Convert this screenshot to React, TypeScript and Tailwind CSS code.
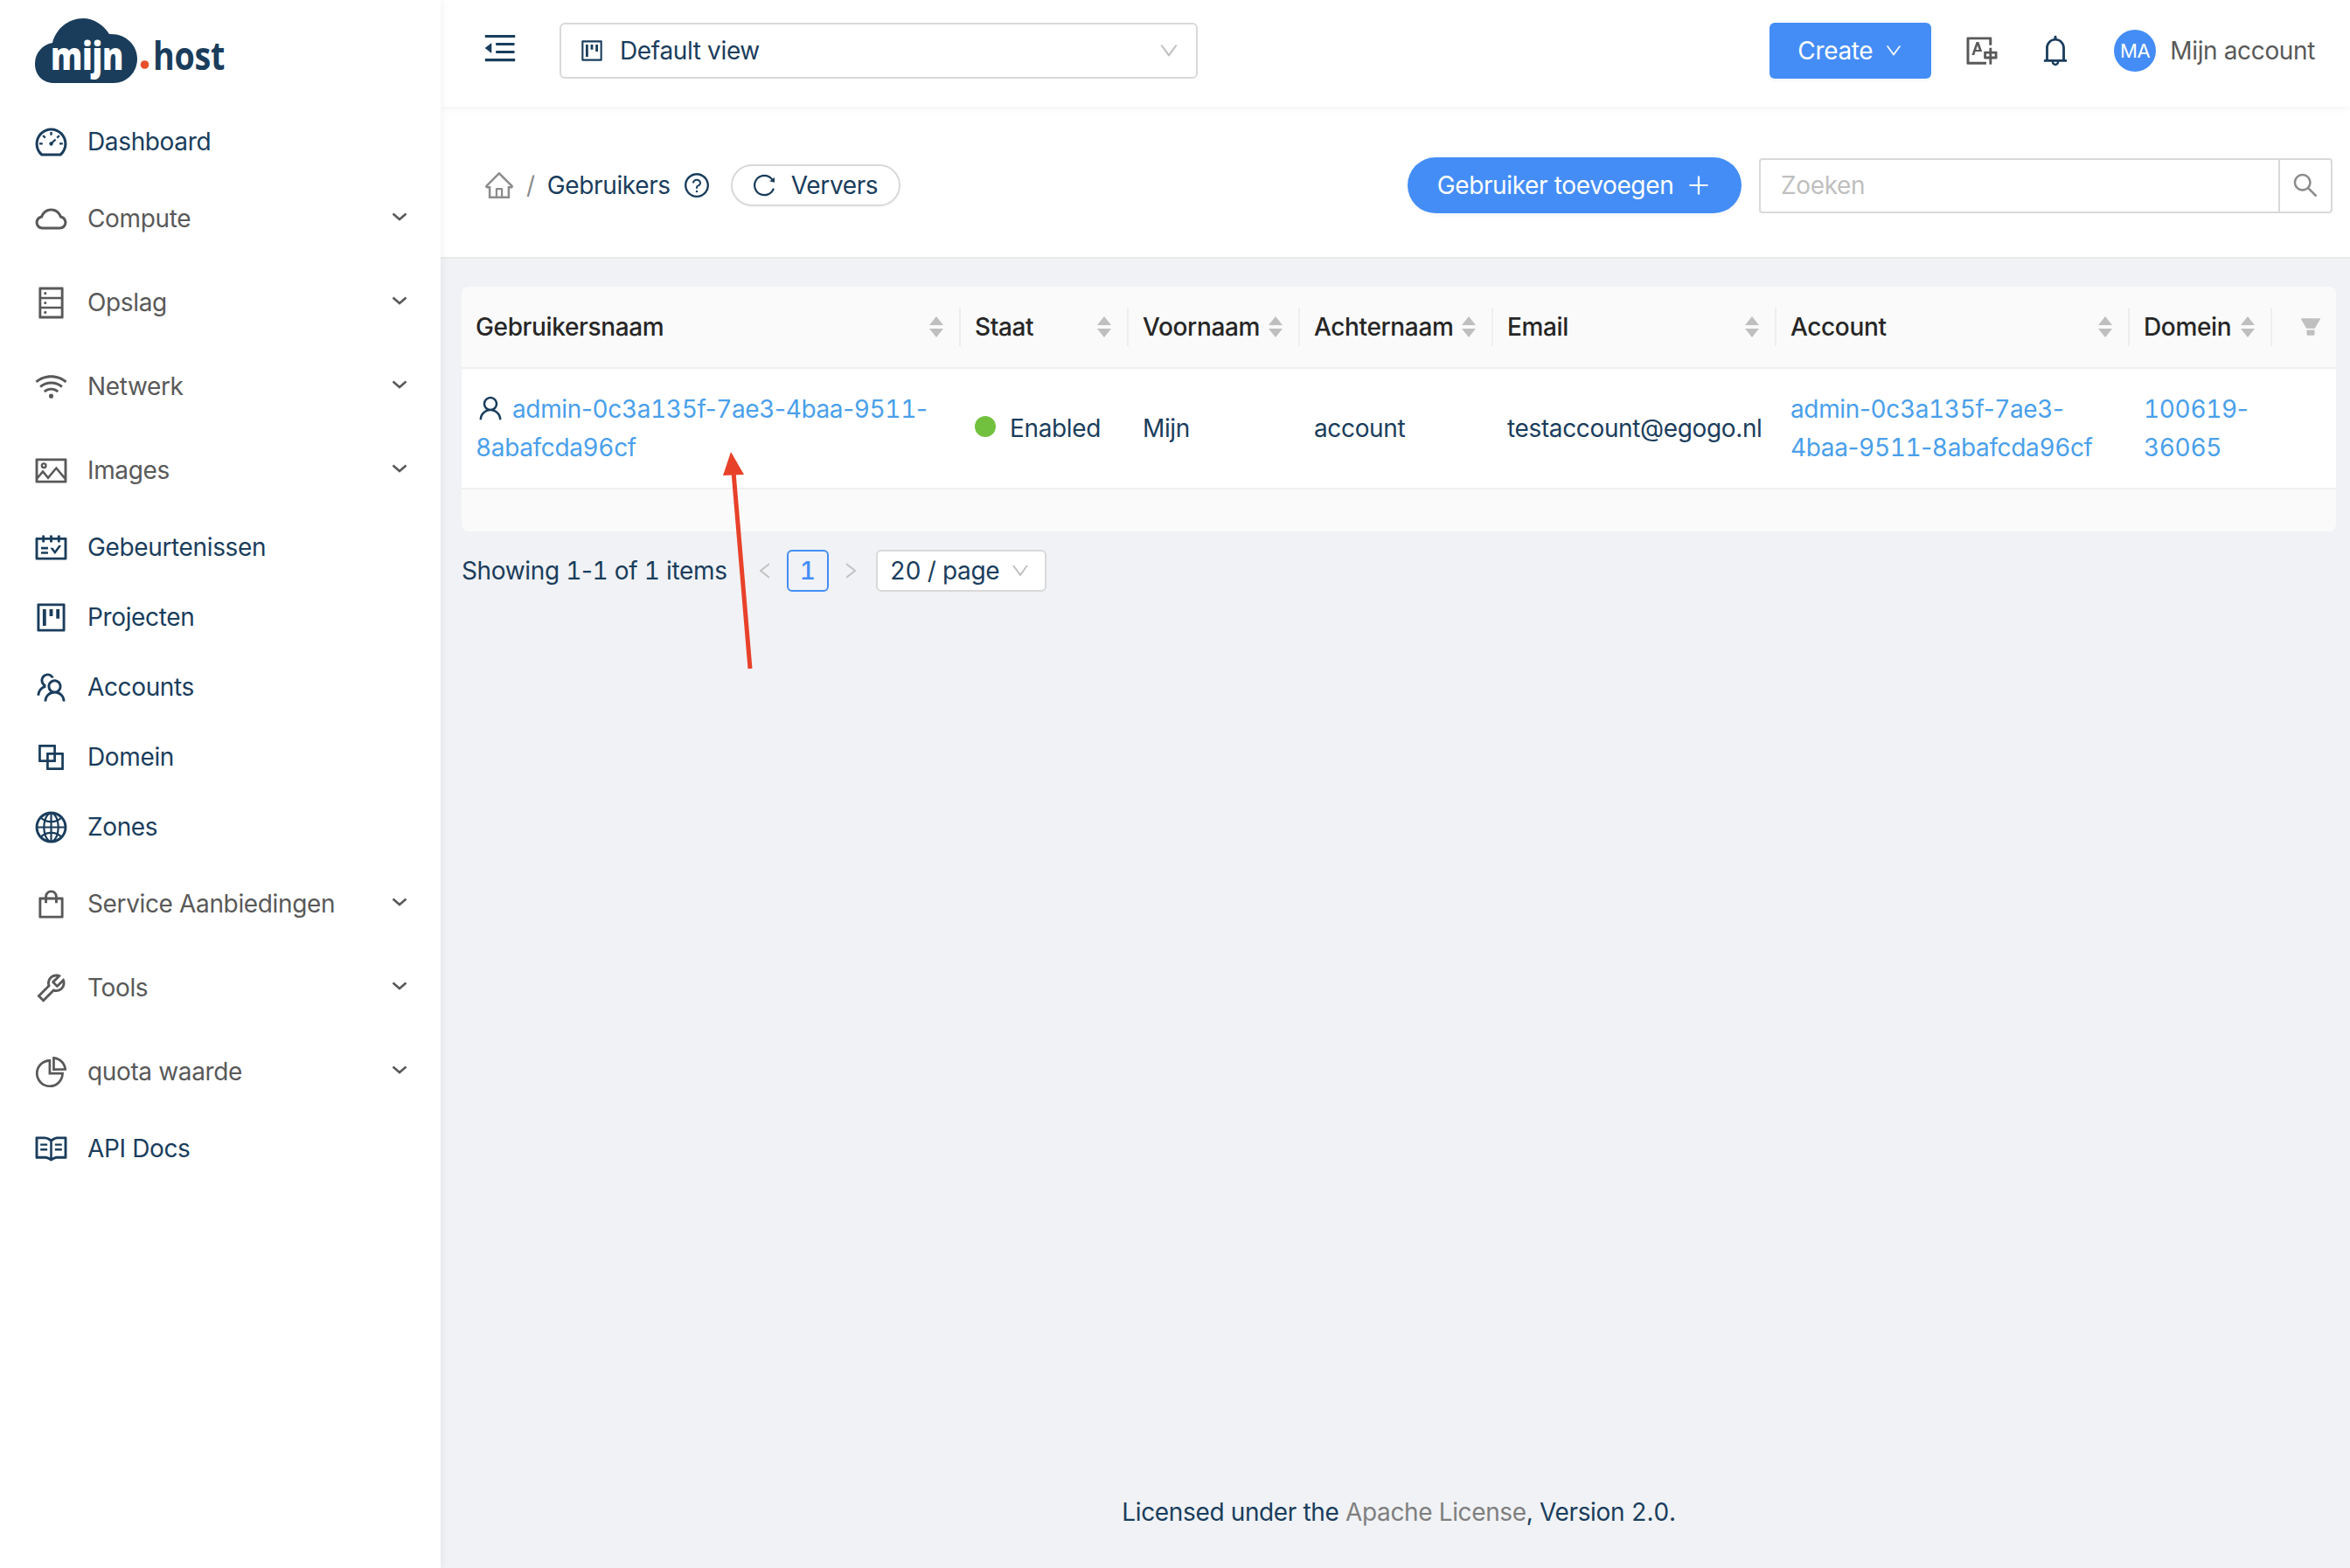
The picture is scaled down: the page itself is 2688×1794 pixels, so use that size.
import type { ReactNode } from 'react';
import {
  AiFillFilter,
  AiOutlineBell,
  AiOutlineBlock,
  AiOutlineCloud,
  AiOutlineDashboard,
  AiOutlineDatabase,
  AiOutlineDown,
  AiOutlineGlobal,
  AiOutlineHome,
  AiOutlineLeft,
  AiOutlineMenuFold,
  AiOutlinePicture,
  AiOutlinePieChart,
  AiOutlinePlus,
  AiOutlineProject,
  AiOutlineQuestionCircle,
  AiOutlineRead,
  AiOutlineReload,
  AiOutlineRight,
  AiOutlineSchedule,
  AiOutlineSearch,
  AiOutlineShopping,
  AiOutlineTeam,
  AiOutlineTool,
  AiOutlineTranslation,
  AiOutlineUser,
  AiOutlineWifi,
} from 'react-icons/ai';

const menu: { label: string; icon: ReactNode; sub?: boolean }[] = [
  { label: 'Dashboard', icon: <AiOutlineDashboard size={41} /> },
  { label: 'Compute', icon: <AiOutlineCloud size={41} />, sub: true },
  { label: 'Opslag', icon: <AiOutlineDatabase size={41} />, sub: true },
  { label: 'Netwerk', icon: <AiOutlineWifi size={41} />, sub: true },
  { label: 'Images', icon: <AiOutlinePicture size={41} />, sub: true },
  { label: 'Gebeurtenissen', icon: <AiOutlineSchedule size={41} /> },
  { label: 'Projecten', icon: <AiOutlineProject size={41} /> },
  { label: 'Accounts', icon: <AiOutlineTeam size={41} /> },
  { label: 'Domein', icon: <AiOutlineBlock size={41} /> },
  { label: 'Zones', icon: <AiOutlineGlobal size={41} /> },
  { label: 'Service Aanbiedingen', icon: <AiOutlineShopping size={41} />, sub: true },
  { label: 'Tools', icon: <AiOutlineTool size={41} />, sub: true },
  { label: 'quota waarde', icon: <AiOutlinePieChart size={41} />, sub: true },
  { label: 'API Docs', icon: <AiOutlineRead size={41} /> },
];

const columns = ['Gebruikersnaam', 'Staat', 'Voornaam', 'Achternaam', 'Email', 'Account', 'Domein'];

// digits are tabular in the original, hyphens are not
function Nums({ text }: { text: string }) {
  return (
    <>
      {text.split(/(\d+)/).map((part, i) =>
        i % 2 ? (
          <span key={i} className="tabular-nums">
            {part}
          </span>
        ) : (
          part
        ),
      )}
    </>
  );
}

function Logo() {
  return (
    <svg width="230" height="80" viewBox="40 20 230 80" className="block overflow-visible">
      <path
        d="M62 95C48 95 40 85 40 73C40 60 49 51 60 49C64 33 78 21 95 21C107 21 118 28 125 39C144 38 157 52 157 67C157 83 145 95 130 95Z"
        fill="#1a3d5c"
      />
      <text x="58" y="80" fill="#fff" fontSize="45" fontWeight="800" textLength="83" lengthAdjust="spacingAndGlyphs" fontFamily="'Open Sans', sans-serif">
        mijn
      </text>
      <circle cx="165.5" cy="74" r="4.8" fill="#e8502a" />
      <text x="175" y="80" fill="#1a3d5c" fontSize="44" fontWeight="700" textLength="82" lengthAdjust="spacingAndGlyphs" fontFamily="'Open Sans', sans-serif">
        host
      </text>
    </svg>
  );
}

function SubArrow() {
  return (
    <svg width="18" height="10" viewBox="0 0 18 10" fill="none" stroke="#595959" strokeWidth="2.6">
      <path d="M1.5 1.5L9 8L16.5 1.5" />
    </svg>
  );
}

function SideMenu() {
  return (
    <aside className="relative z-20 w-[504px] shrink-0 bg-white shadow-[2px_0_8px_rgba(29,35,41,0.05)]">
      <div className="h-[122px] pl-[40px] pt-[20px]">
        <Logo />
      </div>
      {menu.map(item => (
        <div
          key={item.label}
          className={`flex items-center pl-[40px] pr-[38px] ${item.sub ? 'h-[96px] text-[#595959]' : 'h-[80px] text-[#1a3d5c]'}`}
        >
          <span className="flex w-[36px] justify-center">
            <span className="-mx-[4px] flex">{item.icon}</span>
          </span>
          <span className="ml-[24px]">{item.label}</span>
          {item.sub && (
            <span className="ml-auto flex -translate-y-[2px]">
              <SubArrow />
            </span>
          )}
        </div>
      ))}
    </aside>
  );
}

function TopBar() {
  return (
    <header className="relative z-10 flex h-[122px] shrink-0 items-center bg-white pl-[46px] pr-[40px] shadow-[0_2px_8px_rgba(0,0,0,0.05)]">
      <span className="-translate-y-[6px] text-[#1a3d5c]">
        <AiOutlineMenuFold size={44} />
      </span>
      <div className="ml-[46px] flex h-[64px] w-[730px] -translate-y-[3px] items-center rounded-[6px] border-2 border-[#d9d9d9] pl-[20px] pr-[18px]">
        <AiOutlineProject size={30} />
        <span className="ml-[17px]">Default view</span>
        <span className="ml-auto text-[#bfbfbf]">
          <AiOutlineDown size={26} />
        </span>
      </div>
      <div className="ml-auto flex -translate-y-[3px] items-center">
        <button className="flex h-[64px] w-[185px] items-center justify-center gap-[13px] rounded-[6px] bg-[#448df6] text-white shadow-[0_4px_0_rgba(0,0,0,0.02)]">
          Create
          <AiOutlineDown size={22} />
        </button>
        <span className="ml-[38px] text-[#595959]">
          <AiOutlineTranslation size={40} />
        </span>
        <span className="ml-[44px] text-[#1a3d5c]">
          <AiOutlineBell size={40} />
        </span>
        <span className="ml-[47px] flex h-[48px] w-[48px] items-center justify-center rounded-full bg-[#448df6] text-[22px] text-white">
          MA
        </span>
        <span className="ml-[16px] text-[#595959]">Mijn account</span>
      </div>
    </header>
  );
}

function Toolbar() {
  return (
    <div className="flex h-[174px] shrink-0 items-center border-b-2 border-[#e8e8e8] bg-white pl-[49px] pr-[20px] pt-[8px]">
      <span className="text-[#8c8c8c]">
        <AiOutlineHome size={36} />
      </span>
      <span className="ml-[13px] text-[#8c8c8c]">/</span>
      <span className="ml-[14px]">Gebruikers</span>
      <span className="ml-[14px]">
        <AiOutlineQuestionCircle size={32} />
      </span>
      <button className="ml-[23px] flex h-[48px] items-center rounded-full border-2 border-[#d9d9d9] pl-[21px] pr-[24px] shadow-[0_2px_0_rgba(0,0,0,0.015)]">
        <AiOutlineReload size={30} />
        <span className="ml-[16px]">Ververs</span>
      </button>
      <button className="ml-auto flex h-[64px] w-[382px] items-center justify-center gap-[14px] rounded-full bg-[#448df6] text-white shadow-[0_4px_0_rgba(0,0,0,0.02)]">
        Gebruiker toevoegen
        <AiOutlinePlus size={30} />
      </button>
      <div className="ml-[20px] flex h-[63px] w-[656px] items-center rounded-[4px] border-2 border-[#d9d9d9]">
        <span className="flex-1 pl-[23px] text-[#bfbfbf]">Zoeken</span>
        <span className="flex h-full w-[60px] items-center justify-center border-l-2 border-[#d9d9d9] text-[#8c8c8c]">
          <AiOutlineSearch size={34} />
        </span>
      </div>
    </div>
  );
}

function SortIcon() {
  return (
    <svg width="16" height="24" viewBox="0 0 16 24" className="shrink-0" fill="#bfbfbf">
      <path d="M8 0L16 10H0Z" />
      <path d="M0 14H16L8 24Z" />
    </svg>
  );
}

const gridCols = 'grid grid-cols-[571px_192px_196px_221px_324px_404px_163px_73px]';

function UsersTable() {
  const link = 'text-[#4a9fea]';
  return (
    <div className="overflow-hidden rounded-[8px] bg-[#fafafa]">
      <div className={`${gridCols} h-[94px] items-start border-b-2 border-[#f0f0f0] pt-[24px] font-medium text-[#262626]`}>
        {columns.map(col => (
          <div key={col} className="flex h-[44px] items-center justify-between border-r-2 border-[#eeeeee] pl-[16px] pr-[18px]">
            <span>{col}</span>
            <SortIcon />
          </div>
        ))}
        <div className="flex h-[44px] items-center justify-center pl-[14px] text-[#bfbfbf]">
          <AiFillFilter size={28} />
        </div>
      </div>
      <div className={`${gridCols} h-[138px] border-b-2 border-[#f0f0f0] bg-white leading-[44px]`}>
        <div className="flex items-center px-[16px]">
          <div>
            <AiOutlineUser size={34} className="mb-[6px] mr-[8px] inline-block align-middle" />
            <span className={link}>
              <Nums text="admin-0c3a135f-7ae3-4baa-9511-" />
              <br />
              <Nums text="8abafcda96cf" />
            </span>
          </div>
        </div>
        <div className="flex items-center px-[16px]">
          <span className="mr-[16px] h-[24px] w-[24px] -translate-y-[2px] rounded-full bg-[#71c13e]" />
          Enabled
        </div>
        <div className="flex items-center px-[16px]">Mijn</div>
        <div className="flex items-center px-[16px]">account</div>
        <div className="flex items-center px-[16px]">testaccount@egogo.nl</div>
        <div className={`flex items-center px-[16px] ${link}`}>
          <span>
            <Nums text="admin-0c3a135f-7ae3-" />
            <br />
            <Nums text="4baa-9511-8abafcda96cf" />
          </span>
        </div>
        <div className={`flex items-center px-[16px] ${link}`}>
          <span>
            <Nums text="100619-" />
            <br />
            <Nums text="36065" />
          </span>
        </div>
        <div />
      </div>
      <div className="h-[48px]" />
    </div>
  );
}

function Pagination() {
  return (
    <div className="mt-[21px] flex h-[48px] items-center">
      <span>
        <Nums text="Showing 1-1 of 1 items" />
      </span>
      <span className="ml-[31px] text-[#bfbfbf]">
        <AiOutlineLeft size={24} />
      </span>
      <span className="ml-[13px] flex h-[48px] w-[48px] items-center justify-center rounded-[6px] border-2 border-[#448df6] font-medium text-[#448df6] tabular-nums">
        1
      </span>
      <span className="ml-[13px] text-[#bfbfbf]">
        <AiOutlineRight size={24} />
      </span>
      <div className="ml-[17px] flex h-[48px] w-[195px] items-center rounded-[6px] border-2 border-[#d9d9d9] bg-white pl-[14px]">
        <span>
          <Nums text="20 / page" />
        </span>
        <span className="ml-[12px] text-[#bfbfbf]">
          <AiOutlineDown size={24} />
        </span>
      </div>
    </div>
  );
}

function RedArrow() {
  return (
    <svg className="absolute left-[320px] top-[512px]" width="50" height="260" viewBox="0 0 50 260" fill="none">
      <path d="M15 28L34 253" stroke="#e8412a" strokeWidth="5" />
      <path d="M12 5L27 31L3 32Z" fill="#e8412a" />
    </svg>
  );
}

export default function App() {
  return (
    <div
      className="flex h-screen w-full overflow-hidden bg-[#f0f2f5] text-[28px] leading-[44px] tracking-[-0.36px] text-[#1a3d5c]"
      style={{ fontFamily: 'Inter, sans-serif' }}
    >
      <SideMenu />
      <main className="relative flex min-w-0 flex-1 flex-col">
        <TopBar />
        <Toolbar />
        <div className="flex flex-1 flex-col pl-[24px] pr-[16px] pt-[32px]">
          <UsersTable />
          <Pagination />
          <footer className="mt-auto pb-[42px] text-center">
            Licensed under the <span className="text-[#7f7f7f]">Apache License</span>, Version <Nums text="2.0." />
          </footer>
        </div>
        <RedArrow />
      </main>
    </div>
  );
}
